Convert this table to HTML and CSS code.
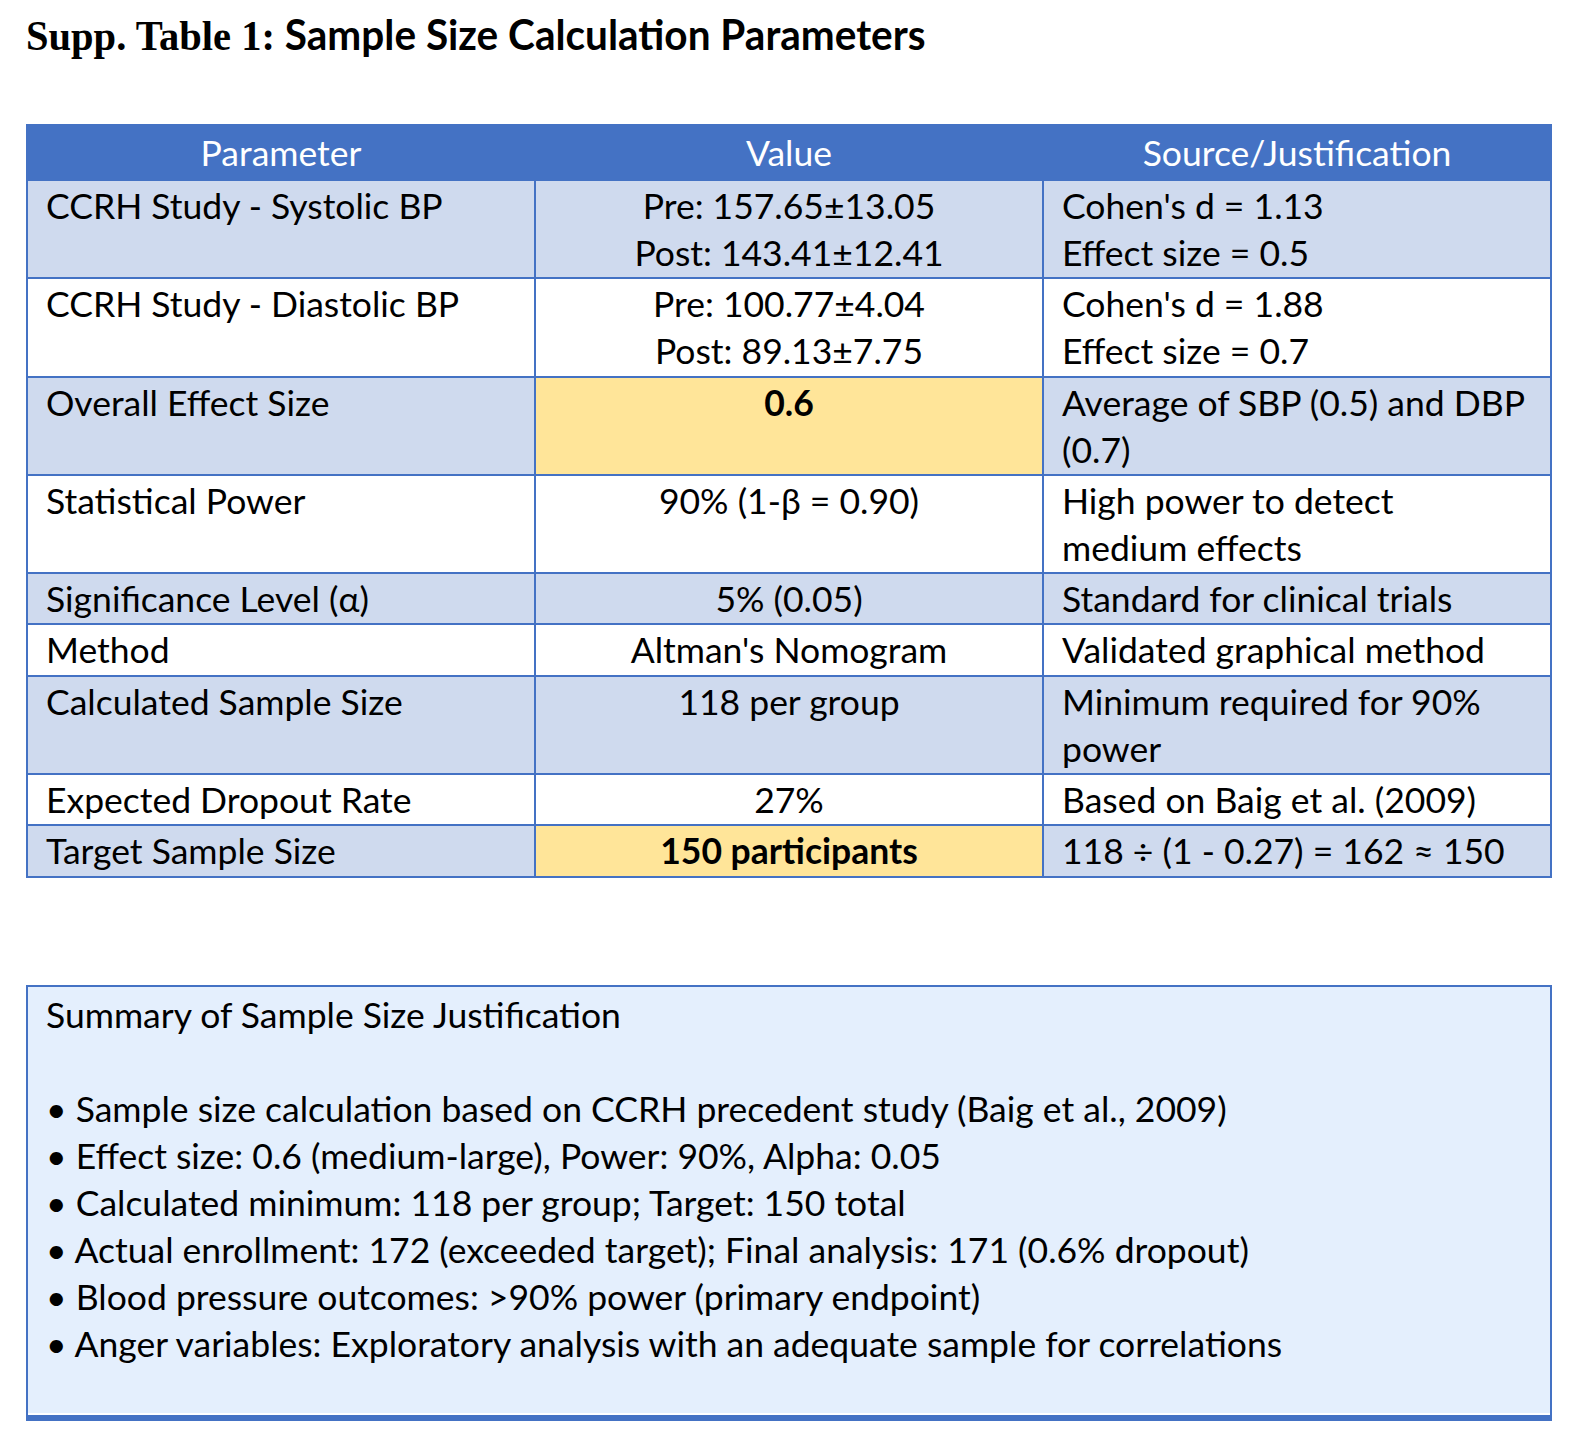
FILE: index.html
```html
<!DOCTYPE html>
<html lang="en">
<head>
<meta charset="utf-8">
<title>Supp. Table 1</title>
<link rel="stylesheet" href="styles.css">
</head>
<body>
<div class="page">
  <h1 class="title"><span class="title-inner"><span class="serif">Supp. Table 1:</span> <span class="sans">Sample Size Calculation Parameters</span></span></h1>

  <table class="params">
    <thead>
      <tr>
        <th>Parameter</th>
        <th>Value</th>
        <th>Source/Justification</th>
      </tr>
    </thead>
    <tbody>
      <tr class="shade">
        <td>CCRH Study - Systolic BP</td>
        <td class="c">Pre: 157.65±13.05<br>Post: 143.41±12.41</td>
        <td>Cohen's d = 1.13<br>Effect size = 0.5</td>
      </tr>
      <tr>
        <td>CCRH Study - Diastolic BP</td>
        <td class="c">Pre: 100.77±4.04<br>Post: 89.13±7.75</td>
        <td>Cohen's d = 1.88<br>Effect size = 0.7</td>
      </tr>
      <tr class="shade">
        <td>Overall Effect Size</td>
        <td class="c hl"><b>0.6</b></td>
        <td>Average of SBP (0.5) and DBP<br>(0.7)</td>
      </tr>
      <tr>
        <td>Statistical Power</td>
        <td class="c">90% (1-β = 0.90)</td>
        <td>High power to detect<br>medium effects</td>
      </tr>
      <tr class="shade">
        <td>Significance Level (α)</td>
        <td class="c">5% (0.05)</td>
        <td>Standard for clinical trials</td>
      </tr>
      <tr>
        <td>Method</td>
        <td class="c">Altman's Nomogram</td>
        <td>Validated graphical method</td>
      </tr>
      <tr class="shade">
        <td>Calculated Sample Size</td>
        <td class="c">118 per group</td>
        <td>Minimum required for 90%<br>power</td>
      </tr>
      <tr>
        <td>Expected Dropout Rate</td>
        <td class="c">27%</td>
        <td>Based on Baig et al. (2009)</td>
      </tr>
      <tr class="shade">
        <td>Target Sample Size</td>
        <td class="c hl"><b>150 participants</b></td>
        <td>118 ÷ (1 - 0.27) = 162 ≈ 150</td>
      </tr>
    </tbody>
  </table>

  <section class="summary">
    <div class="summary-body">
      <div class="summary-title">Summary of Sample Size Justification</div>
      <ul class="summary-list">
        <li>• Sample size calculation based on CCRH precedent study (Baig et al., 2009)</li>
        <li>• Effect size: 0.6 (medium-large), Power: 90%, Alpha: 0.05</li>
        <li>• Calculated minimum: 118 per group; Target: 150 total</li>
        <li>• Actual enrollment: 172 (exceeded target); Final analysis: 171 (0.6% dropout)</li>
        <li>• Blood pressure outcomes: &gt;90% power (primary endpoint)</li>
        <li>• Anger variables: Exploratory analysis with an adequate sample for correlations</li>
      </ul>
    </div>
  </section>
</div>
</body>
</html>
```

FILE: styles.css
```css
html, body {
  margin: 0;
  padding: 0;
  background: #ffffff;
}

body {
  font-family: Lato, "Liberation Sans", sans-serif;
  color: #000000;
}

.page {
  padding: 0 36px 0 26px;
}

.title {
  margin: 0;
  padding-top: 8px;
  height: 116px;
  font-size: 42px;
  line-height: 52px;
  font-weight: bold;
  white-space: nowrap;
}

.title-inner {
  display: inline-block;
  transform: scaleX(0.965);
  transform-origin: left center;
}

.serif {
  font-family: "Liberation Serif", serif;
}

.sans {
  font-family: Lato, "Liberation Sans", sans-serif;
}

.params {
  width: 1526px;
  border-collapse: collapse;
  table-layout: fixed;
  font-size: 35.5px;
  line-height: 47px;
}

.params th {
  background: #4472c4;
  color: #ffffff;
  font-weight: normal;
  height: 53px;
  padding: 0;
  border: 2px solid #4472c4;
  text-align: center;
  vertical-align: middle;
}

.params td {
  border: 2px solid #4472c4;
  padding: 1px 8px 1.3px 18px;
  vertical-align: top;
  text-align: left;
  background: #ffffff;
  white-space: nowrap;
}

.params tr.shade td {
  background: #cfdaee;
}

.params td.c {
  text-align: center;
  padding-right: 18px;
}

.params tr td.hl {
  background: #ffe599;
}

.summary {
  margin-top: 107px;
  width: 1526px;
  box-sizing: border-box;
  border: 2px solid #4472c4;
  border-bottom-width: 6px;
  padding-bottom: 2px;
  background: #ffffff;
  font-size: 35.5px;
  line-height: 47px;
}

.summary-body {
  background: #e4effd;
  padding: 4px 18px 0 18px;
}

.summary-title {
  margin-bottom: 47px;
}

.summary-list {
  list-style: none;
  margin: 0;
  padding: 0 0 46px 0;
}
```
